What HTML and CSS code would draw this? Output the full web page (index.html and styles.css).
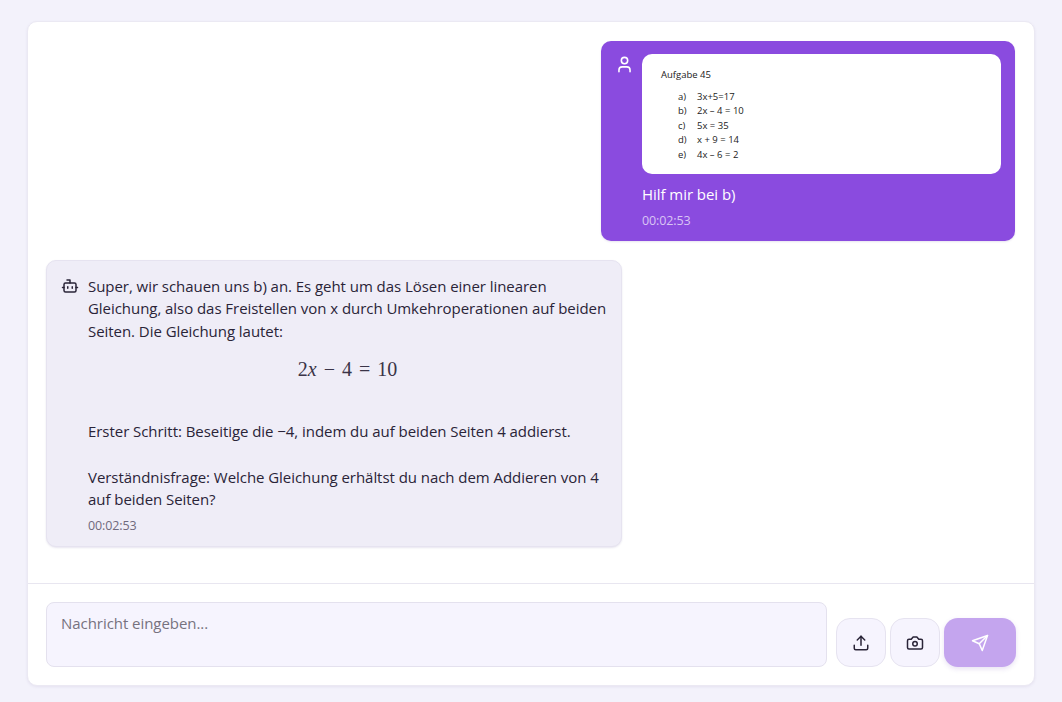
FILE: index.html
```html
<!DOCTYPE html>
<html lang="de">
<head>
  <meta charset="UTF-8">
  <title>Chat</title>
  <link rel="stylesheet" href="styles.css">
</head>
<body>

  <div class="chat">
    <div class="messages">

      <div class="msg user">
        <svg class="msg-icon" viewBox="0 0 24 24"><path d="M19 21v-2a4 4 0 0 0-4-4H9a4 4 0 0 0-4 4v2"/><circle cx="12" cy="7" r="4"/></svg>
        <div class="msg-body">
          <div class="sheet">
            <div class="sheet-title">Aufgabe 45</div>
            <ol class="sheet-list">
              <li><span>a)</span>3x+5=17</li>
              <li><span>b)</span>2x – 4 = 10</li>
              <li><span>c)</span>5x = 35</li>
              <li><span>d)</span>x + 9 = 14</li>
              <li><span>e)</span>4x – 6 = 2</li>
            </ol>
          </div>
          <p class="msg-text">Hilf mir bei b)</p>
          <div class="time">00:02:53</div>
        </div>
      </div>

      <div class="msg bot">
        <svg class="msg-icon" viewBox="0 0 24 24"><path d="M12 8V4H8"/><rect x="4" y="8" width="16" height="12" rx="2"/><path d="M2 14h2"/><path d="M20 14h2"/><path d="M15 13v2"/><path d="M9 13v2"/></svg>
        <div class="msg-body">
          <p class="msg-text">Super, wir schauen uns b) an. Es geht um das Lösen einer linearen Gleichung, also das Freistellen von x durch Umkehroperationen auf beiden Seiten. Die Gleichung lautet:</p>
          <div class="formula"><span>2<i>x</i></span><span class="op">−</span><span>4</span><span class="op">=</span><span>10</span></div>
          <p class="msg-text">Erster Schritt: Beseitige die −4, indem du auf beiden Seiten 4 addierst.</p>
          <p class="msg-text next">Verständnisfrage: Welche Gleichung erhältst du nach dem Addieren von 4 auf beiden Seiten?</p>
          <div class="time">00:02:53</div>
        </div>
      </div>

    </div>

    <div class="composer">
      <textarea class="input" placeholder="Nachricht eingeben..."></textarea>
      <button class="btn">
        <svg viewBox="0 0 24 24"><path d="M21 15v4a2 2 0 0 1-2 2H5a2 2 0 0 1-2-2v-4"/><polyline points="17 8 12 3 7 8"/><line x1="12" y1="3" x2="12" y2="15"/></svg>
      </button>
      <button class="btn">
        <svg viewBox="0 0 24 24"><path d="M14.5 4h-5L7 7H4a2 2 0 0 0-2 2v9a2 2 0 0 0 2 2h16a2 2 0 0 0 2-2V9a2 2 0 0 0-2-2h-3l-2.5-3z"/><circle cx="12" cy="13" r="3"/></svg>
      </button>
      <button class="btn send">
        <svg viewBox="0 0 24 24"><path d="m22 2-7 20-4-9-9-4Z"/><path d="M22 2 11 13"/></svg>
      </button>
    </div>
  </div>

</body>
</html>
```

FILE: styles.css
```css
* {
  box-sizing: border-box;
}

body {
  margin: 0;
  height: 702px;
  padding: 21px 27px 16px;
  background: #f3f2fb;
  color: #2a2438;
  font-family: 'Open Sans', sans-serif;
  overflow: hidden;
}

svg {
  fill: none;
  stroke: currentColor;
  stroke-width: 2;
  stroke-linecap: round;
  stroke-linejoin: round;
}

.chat {
  display: flex;
  flex-direction: column;
  height: 100%;
  background: #fff;
  border: 1px solid #ebe9f3;
  border-radius: 10px;
  box-shadow: 0 1px 3px rgba(60, 40, 120, 0.08);
}

.messages {
  flex: 1;
  display: flex;
  flex-direction: column;
  gap: 19px;
  padding: 19px 19px 0 18px;
}

.msg {
  display: flex;
  gap: 8px;
  padding: 13px 14px 12px;
  border-radius: 10px;
  box-shadow: 0 1px 2px rgba(60, 40, 120, 0.12);
}

.msg-icon {
  flex: none;
  width: 18px;
  height: 18px;
  margin-top: 3px;
}

.msg-body {
  flex: 1;
}

.msg-text {
  margin: 0;
  font-size: 15px;
  line-height: 22.5px;
  letter-spacing: -0.05px;
}

.msg-text.next {
  margin-top: 23px;
}

.time {
  margin-top: 5px;
  font-size: 12.5px;
  line-height: 20px;
  letter-spacing: -0.12px;
}

.user {
  align-self: flex-end;
  width: 414px;
  height: 200px;
  background: #8a4bdf;
  color: #fff;
}

.user .msg-icon {
  width: 19px;
  height: 19px;
  margin-top: 1px;
}

.user .msg-text {
  margin-top: 9px;
}

.user .time {
  color: #d9c4f5;
}

.bot {
  width: 576px;
  height: 287px;
  padding-right: 10px;
  gap: 9px;
  background: #efedf7;
  border: 1px solid #e6e3f0;
}

.bot .msg-text:first-child {
  margin-top: 0.5px;
}

.bot .time {
  color: #6f6a7c;
}

.sheet {
  height: 120px;
  padding: 14px 19px;
  background: #fff;
  border-radius: 10px;
  color: #222;
  font-size: 9.5px;
}

.sheet-title {
  line-height: 14px;
}

.sheet-list {
  list-style: none;
  margin: 8px 0 0;
  padding: 0 0 0 17px;
}

.sheet-list li {
  line-height: 14.4px;
}

.sheet-list span {
  display: inline-block;
  width: 19px;
}

.formula {
  display: flex;
  justify-content: center;
  gap: 7px;
  margin: 15px 4px 39px 0;
  font-family: 'Liberation Serif', serif;
  font-size: 20px;
  line-height: 24px;
  color: #3a3448;
}

.composer {
  display: flex;
  align-items: flex-end;
  gap: 4px;
  padding: 18px;
  border-top: 1px solid #e8e6f0;
}

.input {
  flex: none;
  width: 781px;
  height: 65px;
  margin-right: 5px;
  padding: 10px 14px;
  background: #f6f4fe;
  border: 1px solid #e4e1ee;
  border-radius: 8px;
  color: #2a2438;
  font-family: inherit;
  font-size: 15px;
  letter-spacing: -0.05px;
  resize: none;
  outline: none;
}

.input::placeholder {
  color: #77727f;
}

.btn {
  display: flex;
  align-items: center;
  justify-content: center;
  width: 50px;
  height: 49px;
  padding: 0;
  background: #f6f4fe;
  border: 1px solid #e6e3f0;
  border-radius: 14px;
  color: #2a2438;
}

.btn svg {
  width: 18px;
  height: 18px;
}

.send {
  width: 72px;
  background: #c4a5ee;
  border: none;
  color: #fff;
  box-shadow: 0 2px 5px rgba(90, 50, 170, 0.14);
}
```
